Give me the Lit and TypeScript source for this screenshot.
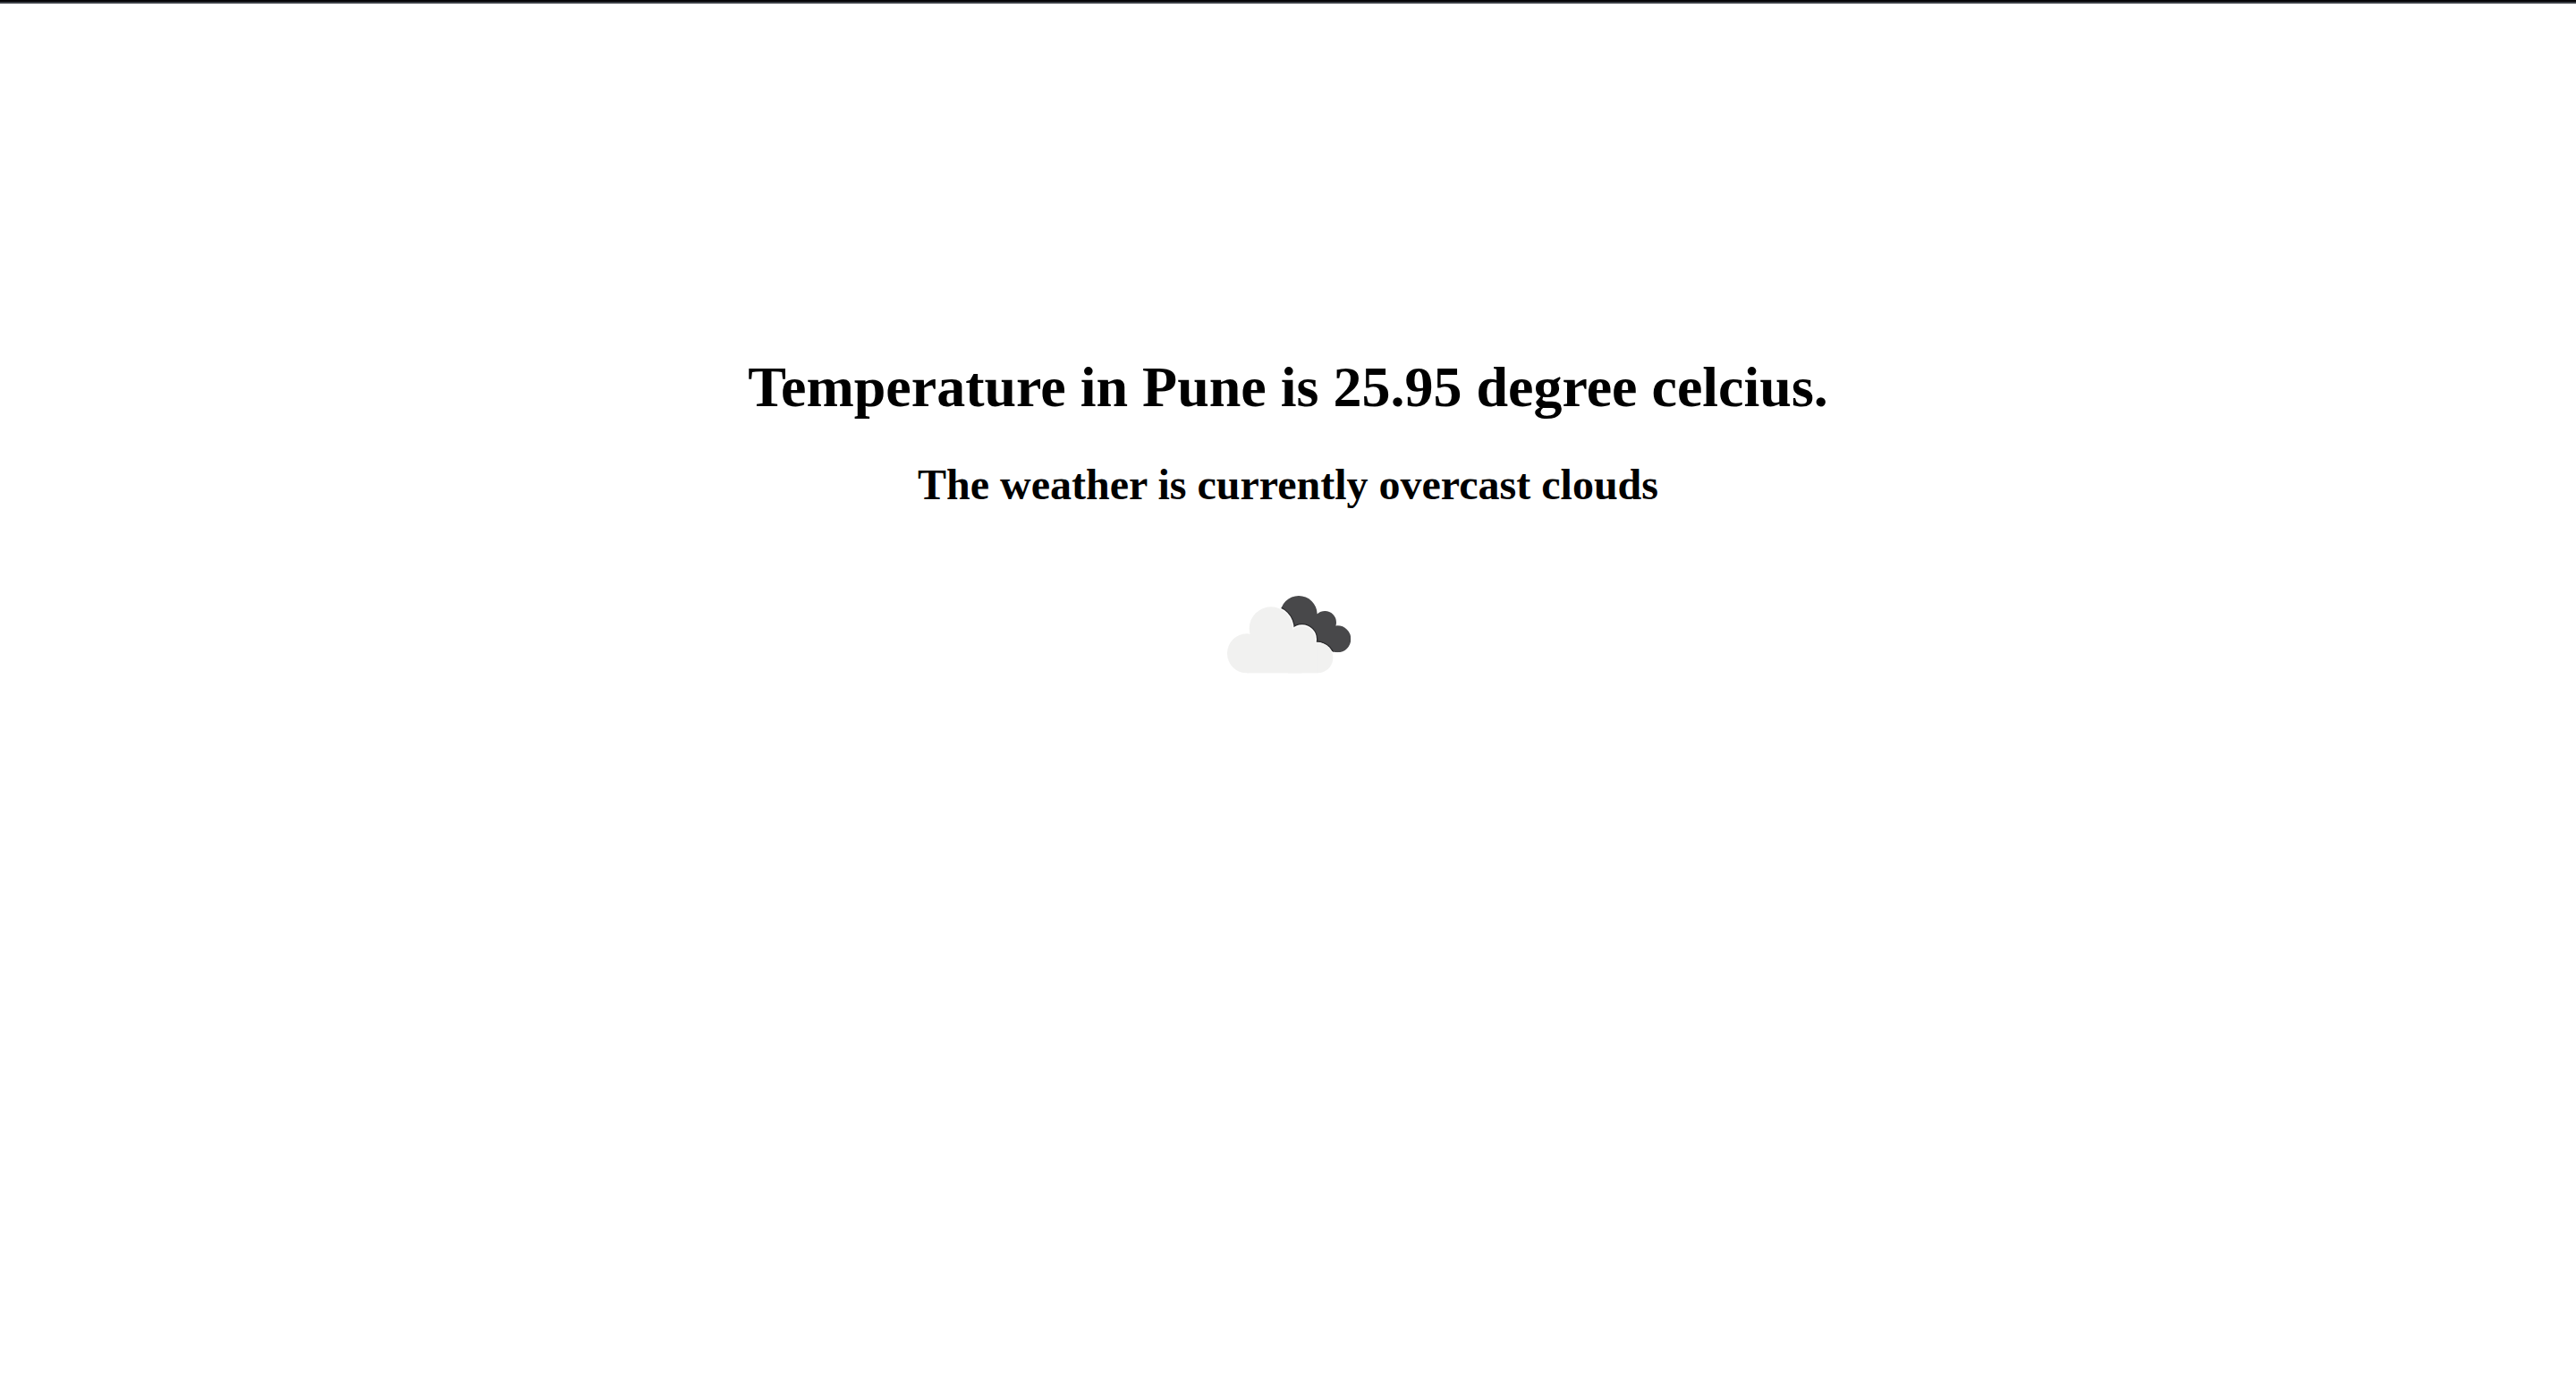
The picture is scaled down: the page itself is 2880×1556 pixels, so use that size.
import { LitElement, html, css } from "lit";
import { customElement, property } from "lit/decorators.js";

@customElement("weather-icon")
class WeatherIcon extends LitElement {
  static styles = css`
    :host { display: block; }
    .icon { display: block; width: 200px; height: 200px; }
  `;

  render() {
    return html`
      <svg class="icon" viewBox="0 0 600 600" role="img" aria-label="overcast clouds">
        <defs>
          <clipPath id="rear">
            <circle cx="336" cy="242" r="62" />
            <circle cx="424" cy="269" r="38" />
            <circle cx="466" cy="325" r="45" />
            <path d="M336 243L424 240L470 320L466 370L380 340L300 280Z" />
          </clipPath>
        </defs>
        <g clip-path="url(#rear)">
          <rect x="260" y="170" width="260" height="210" fill="#48484a" />
          <g fill="#2c2c2e">
            <circle cx="243" cy="291" r="81" />
            <circle cx="347" cy="326" r="53" />
            <circle cx="396" cy="394" r="63" />
          </g>
        </g>
        <g fill="#fff">
          <circle cx="243" cy="291" r="77" />
          <circle cx="347" cy="326" r="49" />
          <circle cx="396" cy="394" r="59" />
        </g>
        <g fill="#f1f1f0">
          <circle cx="162" cy="373" r="66" />
          <circle cx="243" cy="290" r="73" />
          <circle cx="347" cy="326" r="45" />
          <circle cx="400" cy="388" r="51" />
          <rect x="162" y="310" width="185" height="129" />
          <rect x="300" y="340" width="100" height="99" />
        </g>
      </svg>
    `;
  }
}

@customElement("app-root")
class AppRoot extends LitElement {
  static styles = css`
    :host {
      display: block;
      min-height: 100vh;
      background: #fff;
      color: #000;
      font-family: "Liberation Serif", "Times New Roman", serif;
    }
    .edge { height: 2px; background: #050507; border-bottom: 2px solid #3b3f46; }
    .report {
      display: flex;
      flex-direction: column;
      align-items: center;
      padding: 392px 16px 0;
      text-align: center;
    }
    .temperature { margin: 0; font-size: 64px; line-height: 74px; }
    .summary { margin: 44px 0 36px; font-size: 48px; line-height: 56px; }
  `;

  @property() city = "Pune";
  @property({ type: Number }) temperature = 25.95;
  @property() description = "overcast clouds";

  render() {
    return html`
      <div class="edge"></div>
      <main class="report">
        <h1 class="temperature">Temperature in ${this.city} is ${this.temperature} degree celcius.</h1>
        <h2 class="summary">The weather is currently ${this.description}</h2>
        <weather-icon></weather-icon>
      </main>
    `;
  }
}
